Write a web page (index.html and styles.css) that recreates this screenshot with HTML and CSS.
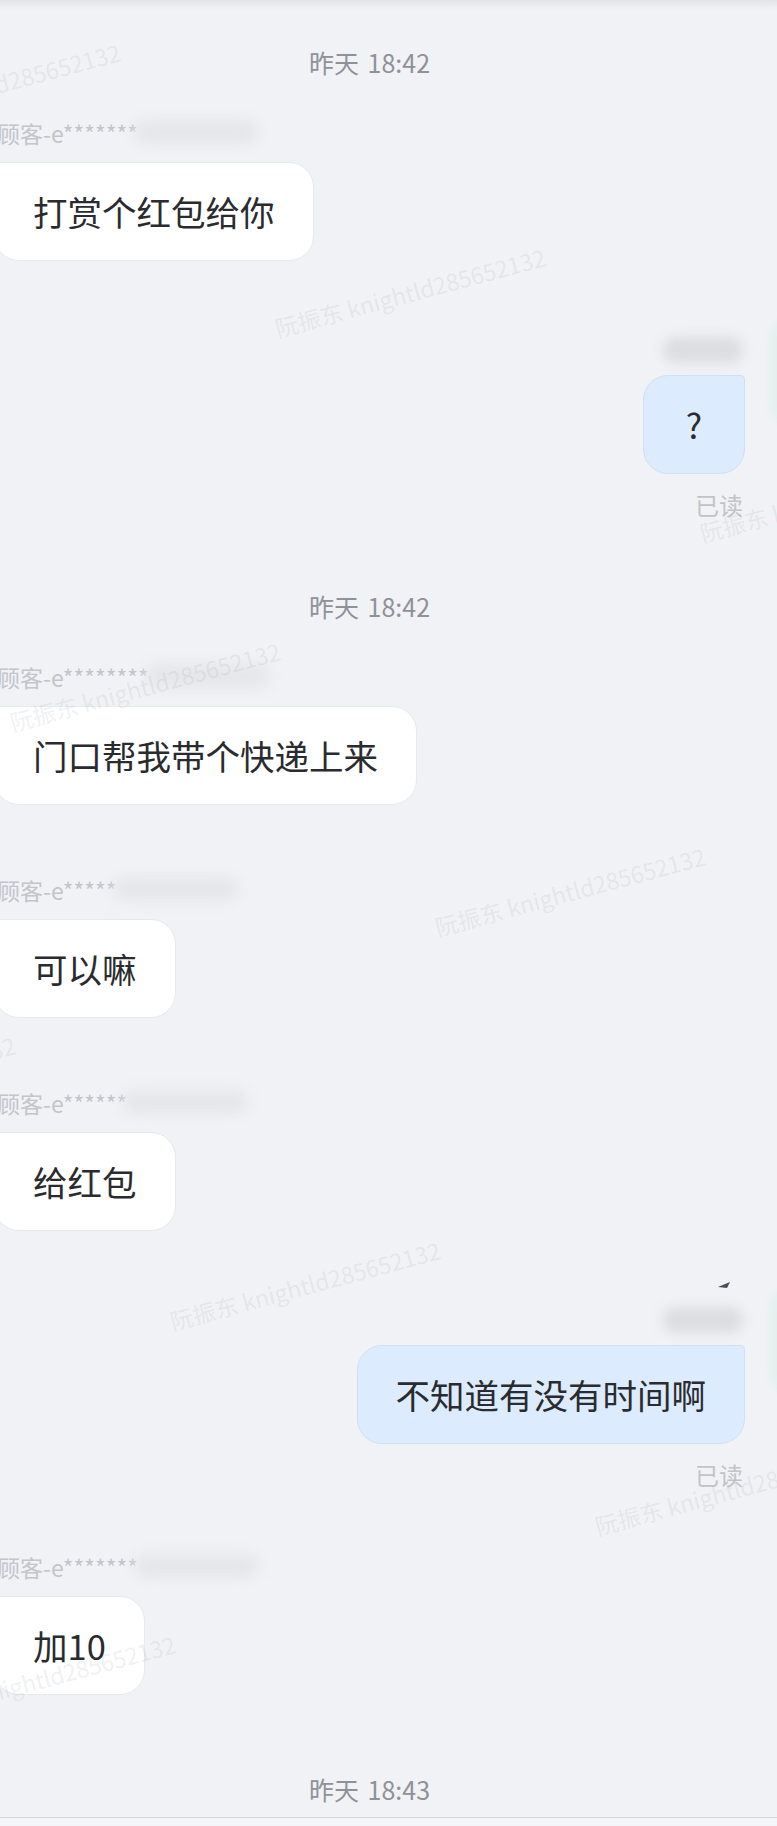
FILE: index.html
```html
<!DOCTYPE html>
<html lang="zh-CN">
<head>
	<meta charset="UTF-8">
	<title>聊天记录</title>
	<link rel="stylesheet" href="styles.css">
</head>
<body>
	<div class="screen">
		<div class="chat">
			<div class="time">昨天 18:42</div>
			<div class="msg in">
				<div class="name">顾客-e*******<span class="mask"></span></div>
				<div class="bubble">打赏个红包给你</div>
			</div>
			<div class="msg out">
				<span class="avatar"></span>
				<div class="name"><span class="mask"></span></div>
				<div class="bubble">?</div>
				<div class="read">已读</div>
			</div>

			<div class="time">昨天 18:42</div>
			<div class="msg in">
				<div class="name">顾客-e********<span class="mask"></span></div>
				<div class="bubble">门口帮我带个快递上来</div>
			</div>
			<div class="msg in">
				<div class="name">顾客-e*****<span class="mask"></span></div>
				<div class="bubble">可以嘛</div>
			</div>
			<div class="msg in">
				<div class="name">顾客-e******<span class="mask"></span></div>
				<div class="bubble">给红包</div>
			</div>
			<div class="msg out">
				<span class="avatar"></span>
				<svg class="tick" width="14" height="8" viewBox="0 0 14 8"><path d="M1 6 L13 1 L10 7 Z" fill="#4a4d55"/></svg>
				<div class="name"><span class="mask"></span></div>
				<div class="bubble">不知道有没有时间啊</div>
				<div class="read">已读</div>
			</div>
			<div class="msg in">
				<div class="name">顾客-e*******<span class="mask"></span></div>
				<div class="bubble">加10</div>
			</div>

			<div class="time">昨天 18:43</div>
		</div>
		<div class="footer"></div>

		<div class="wm wm1">阮振东 knightld285652132</div>
		<div class="wm wm2">阮振东 knightld285652132</div>
		<div class="wm wm3">阮振东 knightld285652132</div>
		<div class="wm wm4">阮振东 knightld285652132</div>
		<div class="wm wm5">阮振东 knightld285652132</div>
		<div class="wm wm6">阮振东 knightld285652132</div>
		<div class="wm wm7">阮振东 knightld285652132</div>
		<div class="wm wm8">阮振东 knightld285652132</div>
		<div class="wm wm9">阮振东 knightld285652132</div>
	</div>
</body>
</html>
```

FILE: styles.css
```css
body{
	margin: 0;
	background: #f1f2f6;
	font-family: "Noto Sans CJK SC", "Noto Sans", sans-serif;
}
.screen{
	position: relative;
	height: 1826px;
	overflow: hidden;
}
.screen::before{
	content: "";
	position: absolute;
	left: 0;
	top: 0;
	width: 100%;
	height: 10px;
	background: linear-gradient(#e3e4e8, rgba(241,242,246,0));
}
.chat{
	width: 751px;
	margin-left: -6px;
	padding-top: 47px;
}
.time{
	height: 30px;
	line-height: 30px;
	margin-top: 79px;
	text-align: center;
	font-size: 25px;
	word-spacing: 3px;
	color: #8f9197;
}
.chat .time:first-child{
	margin-top: 0;
}
.msg{
	display: flex;
	flex-direction: column;
	margin-top: 70px;
	position: relative;
}
.time + .msg{
	margin-top: 41px;
}
.msg.in{
	align-items: flex-start;
}
.msg.out{
	align-items: flex-end;
}
.name{
	height: 30px;
	line-height: 30px;
	padding-left: 3px;
	font-size: 23px;
	color: #c3c5ca;
	white-space: nowrap;
}
.name .mask{
	display: inline-block;
	vertical-align: middle;
	width: 125px;
	height: 24px;
	margin-left: -4px;
	margin-top: -10px;
	border-radius: 12px;
	background: #e5e6ea;
	filter: blur(7px);
}
.out .name .mask{
	width: 80px;
	height: 26px;
	margin: 0 2px 0 0;
	background: #dcdde0;
	filter: blur(6px);
}
.bubble{
	box-sizing: border-box;
	min-width: 102px;
	margin-top: 14px;
	padding: 28px 38px;
	font-size: 34.5px;
	line-height: 41px;
	text-align: center;
	color: #2a2b2e;
	white-space: nowrap;
	border-radius: 4px 25px 25px 25px;
	background: #fff;
	border: 1px solid #e8e9ed;
}
.out .bubble{
	border-radius: 25px 4px 25px 25px;
	background: #dcebfd;
	border-color: #cfe0f6;
}
.read{
	height: 30px;
	line-height: 30px;
	margin-top: 16px;
	margin-bottom: -8px;
	padding-right: 2px;
	font-size: 24px;
	color: #c2c3c7;
}
.avatar{
	position: absolute;
	left: calc(100% + 24px);
	top: -16px;
	width: 50px;
	height: 112px;
	border-radius: 25px;
	background: #e3f1ee;
	filter: blur(3px);
}
.tick{
	position: absolute;
	right: 14px;
	top: -20px;
}
.footer{
	margin-top: 13px;
	height: 9px;
	border-top: 1px solid #d6d7db;
	background: #f4f5f8;
}
.wm{
	position: absolute;
	transform: translate(-50%, -50%) rotate(-15deg);
	white-space: nowrap;
	font-size: 23px;
	color: rgba(140, 146, 165, 0.15);
	pointer-events: none;
}
.wm1{ left: -15px; top: 87px; }
.wm2{ left: 410px; top: 292px; }
.wm3{ left: 835px; top: 497px; }
.wm4{ left: 145px; top: 686px; }
.wm5{ left: 570px; top: 891px; }
.wm6{ left: -120px; top: 1080px; }
.wm7{ left: 305px; top: 1285px; }
.wm8{ left: 730px; top: 1490px; }
.wm9{ left: 40px; top: 1679px; }
```
